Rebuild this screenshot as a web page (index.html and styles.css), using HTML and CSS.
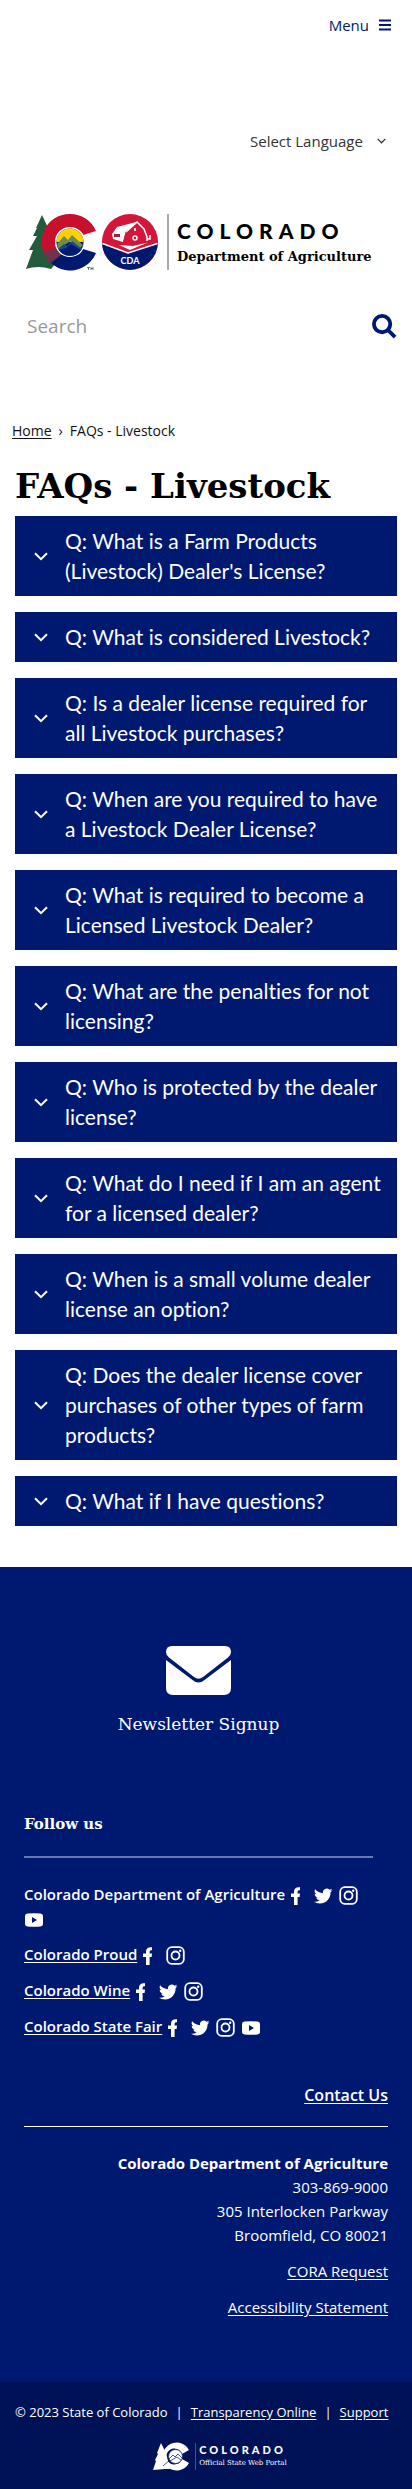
FILE: index.html
```html
<!DOCTYPE html>
<html lang="en">
<head>
<meta charset="utf-8">
<meta name="viewport" content="width=device-width, initial-scale=1">
<title>FAQs - Livestock | Department of Agriculture</title>
<link rel="stylesheet" href="styles.css">
</head>
<body>
<svg class="sprite" aria-hidden="true">
  <symbol id="chevron" viewBox="0 0 14 9"><path d="M1 1.200L7 7.200L13 1.200" fill="none" stroke="currentColor" stroke-width="2"/></symbol>
  <symbol id="facebook" viewBox="2 0 20 20"><path d="M7 19V11H4V7.500H7V5.500C7 2.500 9 .8 13 1.200V4.300C11.300 4.200 10.600 4.600 10.600 6V7.500H13L12.600 11H10.600V19Z" fill="currentColor"/></symbol>
  <symbol id="twitter" viewBox="0 -1 26 26"><path d="M23.950 4.570a10 10 0 0 1-2.820.77 4.960 4.960 0 0 0 2.160-2.720 9.900 9.900 0 0 1-3.120 1.190 4.920 4.920 0 0 0-8.390 4.480A13.900 13.900 0 0 1 1.640 3.160a4.920 4.920 0 0 0 1.520 6.570 4.900 4.900 0 0 1-2.230-.61v.06a4.920 4.920 0 0 0 3.950 4.830 5 5 0 0 1-2.210.080 4.940 4.940 0 0 0 4.600 3.420A9.870 9.870 0 0 1 0 19.540a13.990 13.990 0 0 0 7.550 2.210c9.050 0 14-7.500 14-13.990 0-.21 0-.42-.02-.63a9.940 9.940 0 0 0 2.460-2.550z" fill="currentColor"/></symbol>
  <symbol id="instagram" viewBox="0 0 20 20"><rect x="1.200" y="1.200" width="16.600" height="16.600" rx="4.500" fill="none" stroke="currentColor" stroke-width="1.800"/><circle cx="9.500" cy="9.500" r="4" fill="none" stroke="currentColor" stroke-width="1.800"/><circle cx="14.200" cy="4.800" r="1.200" fill="currentColor"/></symbol>
  <symbol id="youtube" viewBox="0 0 20 20"><path d="M3.500 3.500Q10 2.900 16.500 3.500Q19 3.800 19 6V14Q19 16.200 16.500 16.500Q10 17.100 3.500 16.500Q1 16.200 1 14V6Q1 3.800 3.500 3.500ZM8 7V13L13 10Z" fill="currentColor" fill-rule="evenodd"/></symbol>
</svg>

<header class="header">
  <button class="menu" type="button">Menu
    <svg class="menu-icon" viewBox="0 0 12 12" aria-hidden="true"><path d="M0 1.500H12M0 6H12M0 10.500H12" stroke="currentColor" stroke-width="2"/></svg>
  </button>
  <div class="language">
    <select class="language-select" aria-label="Select Language"><option>Select Language</option></select>
    <svg class="language-icon" viewBox="0 0 14 9" aria-hidden="true"><use href="#chevron"/></svg>
  </div>
  <a class="brand" href="#" aria-label="Colorado Department of Agriculture">
    <svg class="brand-marks" viewBox="0 0 146 60" aria-hidden="true">
      <path d="M17 2L25 19L22 18.500L27 33L24 33L31 50L26 56Q13 52 1 56L8 37H4L12 23H8L12 15H11Z" fill="#235c3c"/>
      <path d="M45 1A28 28 0 0 1 71 18L58 22A15 15 0 1 0 35 41L25 49A28 28 0 0 1 45 1Z" fill="#c8102e"/>
      <path d="M35 40A15 15 0 0 0 58 36L71 40A28 28 0 0 1 25 49Z" fill="#001970"/>
      <path d="M19 39L32 34L37 41L26 50Q20 45 19 39Z" fill="#72334a"/>
      <circle cx="45" cy="29" r="14.300" fill="#001970" stroke="#fff" stroke-width="1.500"/>
      <path d="M31.500 29A13.500 13.500 0 0 1 58.500 29Z" fill="#ffd100"/>
      <path d="M32 31L39 23L43 27L47 22L58 32L55 35L46 28L33 36Z" fill="#6e8b4d"/>
      <path d="M33 36L39 31L42 33L47 28L57 36Q53 43 45 43Q37 43 33 36Z" fill="#174a86"/>
      <path d="M34 37L41 35L46 31L56 37Q52 42.500 45 42.500Q38 42.500 34 37Z" fill="#001970"/>
      <path d="M62 54.500H65M63.500 54.500V57M66 57V54.500L67 56L68 54.500V57" fill="none" stroke="#222" stroke-width=".6"/>
      <circle cx="105" cy="29" r="28" fill="#d2173a"/>
      <path d="M77 31L103 41L132.800 31A28 28 0 0 1 77 31Z" fill="#001970"/>
      <path d="M77.500 30.500L103 40L132.500 30.500" fill="none" stroke="#fff" stroke-width="1.500"/>
      <path d="M87 21L92 14L113 8.500L110 12L101 18L98 29L88 26Z" fill="#fff"/>
      <path d="M101 18L110 11L118 21L117 28H105L98 29Z" fill="#d2173a"/>
      <path d="M101 19L112 9L119 16L122 24V28" fill="none" stroke="#fff" stroke-width="1.500"/>
      <path d="M89 21H95V24H89Z" fill="#9c2238"/>
      <circle cx="110" cy="25" r="2" fill="none" stroke="#fff" stroke-width="1.500"/>
      <path d="M110 15V18M122 26H125V22" fill="none" stroke="#fff" stroke-width="1.500"/>
      <path d="M94 32L108 33L123 29.500L105 37Z" fill="#fff"/>
      <text class="cda" x="105" y="51" text-anchor="middle">CDA</text>
      <path d="M143 1V57" stroke="#555"/>
    </svg>
    <span class="brand-text"><span class="brand-state">COLORADO</span><span class="brand-dept">Department of Agriculture</span></span>
  </a>
  <form class="search">
    <input class="search-input" type="text" placeholder="Search" aria-label="Search">
    <button class="search-button" type="button" aria-label="Submit search">
      <svg viewBox="0 0 26 26" aria-hidden="true"><circle cx="10.500" cy="10.500" r="8.500" fill="none" stroke="currentColor" stroke-width="4"/><path d="M16.500 16.500L24 24" stroke="currentColor" stroke-width="4"/></svg>
    </button>
  </form>
</header>

<nav class="breadcrumb" aria-label="Breadcrumb"><a href="#">Home</a><span>›</span><span>FAQs - Livestock</span></nav>

<main class="main">
  <h1 class="title">FAQs - Livestock</h1>
  <div class="faqs">
    <button class="faq" type="button"><svg class="chevron" aria-hidden="true"><use href="#chevron"/></svg><span>Q: What is a Farm Products (Livestock) Dealer's License?</span></button>
    <button class="faq" type="button"><svg class="chevron" aria-hidden="true"><use href="#chevron"/></svg><span>Q: What is considered Livestock?</span></button>
    <button class="faq" type="button"><svg class="chevron" aria-hidden="true"><use href="#chevron"/></svg><span>Q: Is a dealer license required for all Livestock purchases?</span></button>
    <button class="faq" type="button"><svg class="chevron" aria-hidden="true"><use href="#chevron"/></svg><span>Q: When are you required to have a Livestock Dealer License?</span></button>
    <button class="faq" type="button"><svg class="chevron" aria-hidden="true"><use href="#chevron"/></svg><span>Q: What is required to become a Licensed Livestock Dealer?</span></button>
    <button class="faq" type="button"><svg class="chevron" aria-hidden="true"><use href="#chevron"/></svg><span>Q: What are the penalties for not licensing?</span></button>
    <button class="faq" type="button"><svg class="chevron" aria-hidden="true"><use href="#chevron"/></svg><span>Q: Who is protected by the dealer license?</span></button>
    <button class="faq" type="button"><svg class="chevron" aria-hidden="true"><use href="#chevron"/></svg><span>Q: What do I need if I am an agent for a licensed dealer?</span></button>
    <button class="faq" type="button"><svg class="chevron" aria-hidden="true"><use href="#chevron"/></svg><span>Q: When is a small volume dealer license an option?</span></button>
    <button class="faq" type="button"><svg class="chevron" aria-hidden="true"><use href="#chevron"/></svg><span>Q: Does the dealer license cover purchases of other types of farm products?</span></button>
    <button class="faq" type="button"><svg class="chevron" aria-hidden="true"><use href="#chevron"/></svg><span>Q: What if I have questions?</span></button>
  </div>
</main>

<footer class="footer">
  <a class="newsletter" href="#">
    <svg class="envelope" viewBox="0 0 65 49" aria-hidden="true"><path d="M6 0H59Q65 0 65 6Q65 9 62 11.500L37 31Q32.500 34.500 28 31L3 11.500Q0 9 0 6Q0 0 6 0Z" fill="#fff"/><path d="M0 14L26.500 34Q32.500 39 38.500 34L65 14V42Q65 49 58 49H7Q0 49 0 42Z" fill="#fff"/></svg>
    <span>Newsletter Signup</span>
  </a>
  <section class="follow">
    <h2 class="follow-title">Follow us</h2>
    <p class="social">Colorado Department of Agriculture
      <a href="#" aria-label="Facebook"><svg class="icon"><use href="#facebook"/></svg></a><a href="#" aria-label="Twitter"><svg class="icon"><use href="#twitter"/></svg></a><a href="#" aria-label="Instagram"><svg class="icon"><use href="#instagram"/></svg></a>
      <a href="#" aria-label="YouTube"><svg class="icon"><use href="#youtube"/></svg></a></p>
    <p class="social"><a href="#">Colorado Proud</a>
      <a href="#" aria-label="Facebook"><svg class="icon"><use href="#facebook"/></svg></a><a href="#" aria-label="Instagram"><svg class="icon"><use href="#instagram"/></svg></a></p>
    <p class="social"><a href="#">Colorado Wine</a>
      <a href="#" aria-label="Facebook"><svg class="icon"><use href="#facebook"/></svg></a><a href="#" aria-label="Twitter"><svg class="icon"><use href="#twitter"/></svg></a><a href="#" aria-label="Instagram"><svg class="icon"><use href="#instagram"/></svg></a></p>
    <p class="social"><a href="#">Colorado State Fair</a>
      <a href="#" aria-label="Facebook"><svg class="icon"><use href="#facebook"/></svg></a><a href="#" aria-label="Twitter"><svg class="icon"><use href="#twitter"/></svg></a><a href="#" aria-label="Instagram"><svg class="icon"><use href="#instagram"/></svg></a><a href="#" aria-label="YouTube"><svg class="icon"><use href="#youtube"/></svg></a></p>
  </section>
  <section class="contact">
    <h2 class="contact-title"><a href="#">Contact Us</a></h2>
    <address class="address"><strong>Colorado Department of Agriculture</strong><br>303-869-9000<br>305 Interlocken Parkway<br>Broomfield, CO 80021</address>
    <a href="#">CORA Request</a>
    <a href="#">Accessibility Statement</a>
  </section>
  <div class="legal">
    <p class="legal-line"><span>© 2023 State of Colorado</span><span>|</span><a href="#">Transparency Online</a><span>|</span><a href="#">Support</a></p>
    <a class="portal" href="#" aria-label="Colorado Official State Web Portal">
      <svg class="portal-mark" viewBox="0 0 43 29" aria-hidden="true">
        <path d="M8 1L12 9L14 15L17 27H12L0 28L3 19L2 18L5 12L4 11Z" fill="#fff"/>
        <path d="M36 8A14 14 0 1 0 36 21L29 17A8 8 0 1 1 29 12Z" fill="#fff"/>
        <circle cx="22.500" cy="14.500" r="7" fill="#fff" stroke="#001257" stroke-width=".7"/>
        <path d="M16 17L20 13L22 15L25 12L29 16M17 19L24 15L28 18M10 24L17 18" fill="none" stroke="#001257" stroke-width=".7"/>
        <path d="M42.500 1V28" stroke="#536399" stroke-width=".8"/>
      </svg>
      <span class="portal-text"><span class="portal-state">COLORADO</span><span class="portal-name">Official State Web Portal</span></span>
    </a>
  </div>
</footer>
</body>
</html>
```
FILE: styles.css
```css
* { box-sizing: border-box; }
body {
  margin: 0;
  background: #fff;
  color: #111;
  font-family: "Open Sans", "Noto Sans", sans-serif;
  font-size: 15px;
  line-height: 24px;
}
a { color: inherit; text-underline-offset: 2px; }
button, input, select { font: inherit; border: 0; background: none; padding: 0; margin: 0; }
h1, h2, p { margin: 0; }
.sprite { display: none; }

.header { display: flex; flex-direction: column; padding: 13px 15px 0; }
.menu { display: flex; align-items: center; align-self: flex-end; gap: 10px; margin-right: 6px; color: #001970; }
.menu-icon { width: 12px; height: 12px; }
.language { display: flex; align-items: center; align-self: flex-end; gap: 14px; margin: 92px 11px 0 0; color: #333; }
.language-select { appearance: none; color: inherit; }
.language-icon { width: 9px; height: 6px; }
.brand { display: flex; align-items: center; margin-top: 60px; padding-left: 10px; color: #000; text-decoration: none; }
.brand-marks { flex: none; width: 146px; height: 60px; }
.cda { font: 700 9px Lato, sans-serif; fill: #fff; }
.brand-text { display: flex; flex-direction: column; padding-left: 6px; }
.brand-state { font: 900 21px/28px Lato, sans-serif; letter-spacing: 6px; }
.brand-dept { font: 700 13px/24px "DejaVu Serif", serif; white-space: nowrap; }
.search { display: flex; align-items: center; justify-content: space-between; margin-top: 33px; }
.search-input { flex: 1; min-width: 0; height: 40px; padding: 0 12px; font-size: 19px; }
.search-input::placeholder { color: #999; opacity: 1; }
.search-button { width: 25px; height: 40px; color: #001970; }
.search-button svg { display: block; width: 25px; height: 25px; }

.breadcrumb { display: flex; gap: 7px; margin-top: 73px; padding: 0 12px; font-size: 14px; }
.main { padding: 19px 15px 41px; }
.title { font: 700 34px/48px "DejaVu Serif", serif; color: #000; }
.faqs { display: flex; flex-direction: column; gap: 16px; margin-top: 6px; }
.faq {
  display: flex;
  align-items: center;
  gap: 17px;
  padding: 10px 15px 10px 19px;
  background: #001970;
  color: #fff;
  font: 400 21px/30px Lato, sans-serif;
  font-variant-ligatures: none;
  text-align: left;
}
.chevron { flex: none; width: 14px; height: 9px; }

.footer { background: #001970; color: #fff; }
.newsletter {
  display: flex;
  flex-direction: column;
  align-items: center;
  gap: 17px;
  padding: 79px 15px 0 0;
  font: 400 17px/24px "DejaVu Serif", serif;
  text-decoration: none;
}
.envelope { width: 65px; height: 49px; }
.follow { padding: 76px 39px 0 24px; }
.follow-title { margin-bottom: 24px; padding-bottom: 20px; border-bottom: 2px solid #6478b8; font: 700 15px/24px "DejaVu Serif", serif; }
.social { margin-bottom: 12px; font-weight: 600; }
.icon { width: 20px; height: 20px; margin-right: 5px; vertical-align: middle; }
.contact { display: flex; flex-direction: column; align-items: flex-end; gap: 12px; padding: 33px 24px 63px; text-align: right; }
.contact-title { align-self: stretch; margin-bottom: 12px; padding-bottom: 19px; border-bottom: 1px solid #fff; font-size: 16px; font-weight: 600; line-height: 24px; }
.address { font-style: normal; }
.legal { padding: 18px 15px; background: #001257; }
.legal-line { display: flex; gap: 8px; font-size: 13px; white-space: nowrap; }
.portal { display: flex; align-items: center; justify-content: center; margin-top: 18px; padding-left: 28px; text-decoration: none; }
.portal-mark { width: 43px; height: 29px; }
.portal-text { display: flex; flex-direction: column; padding-left: 3px; }
.portal-state { font: 900 11px/14px Lato, sans-serif; letter-spacing: 3px; }
.portal-name { font: 400 7px/13px "DejaVu Serif", serif; white-space: nowrap; }
```
